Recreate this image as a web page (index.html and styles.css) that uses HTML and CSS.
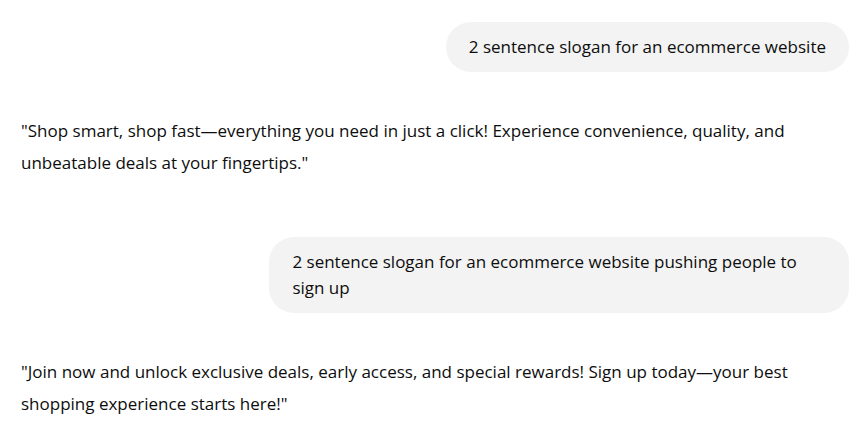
FILE: index.html
```html
<!DOCTYPE html>
<html lang="en">
<head>
<meta charset="utf-8">
<title>Chat</title>
<link rel="stylesheet" href="styles.css">
</head>
<body>
<main class="thread">
  <div class="msg user first">
    <div class="bubble">2 sentence slogan for an ecommerce website</div>
  </div>
  <div class="msg assistant">
    <p>"Shop smart, shop fast—everything you need in just a click! Experience convenience, quality, and unbeatable deals at your fingertips."</p>
  </div>
  <div class="msg user">
    <div class="bubble">2 sentence slogan for an ecommerce website pushing people to sign up</div>
  </div>
  <div class="msg assistant">
    <p>"Join now and unlock exclusive deals, early access, and special rewards! Sign up today—your best shopping experience starts here!"</p>
  </div>
</main>
</body>
</html>
```
FILE: styles.css
```css
html, body {
  margin: 0;
  padding: 0;
  background: #ffffff;
}
body {
  font-family: "Open Sans", "Noto Sans", sans-serif;
  font-size: 17px;
  color: #0d0d0d;
}
.thread {
  display: flex;
  flex-direction: column;
  padding: 22px 19px 0 21px;
}
.msg.user {
  display: flex;
  justify-content: flex-end;
  margin-top: 58px;
}
.msg.user.first {
  margin-top: 0;
}
.bubble {
  max-width: 70%;
  box-sizing: border-box;
  background: #f3f3f3;
  border-radius: 25px;
  padding: 12px 23px;
  line-height: 26px;
}
.msg.assistant {
  margin-top: 43px;
}
.msg.assistant p {
  margin: 0;
  line-height: 32px;
}
```
